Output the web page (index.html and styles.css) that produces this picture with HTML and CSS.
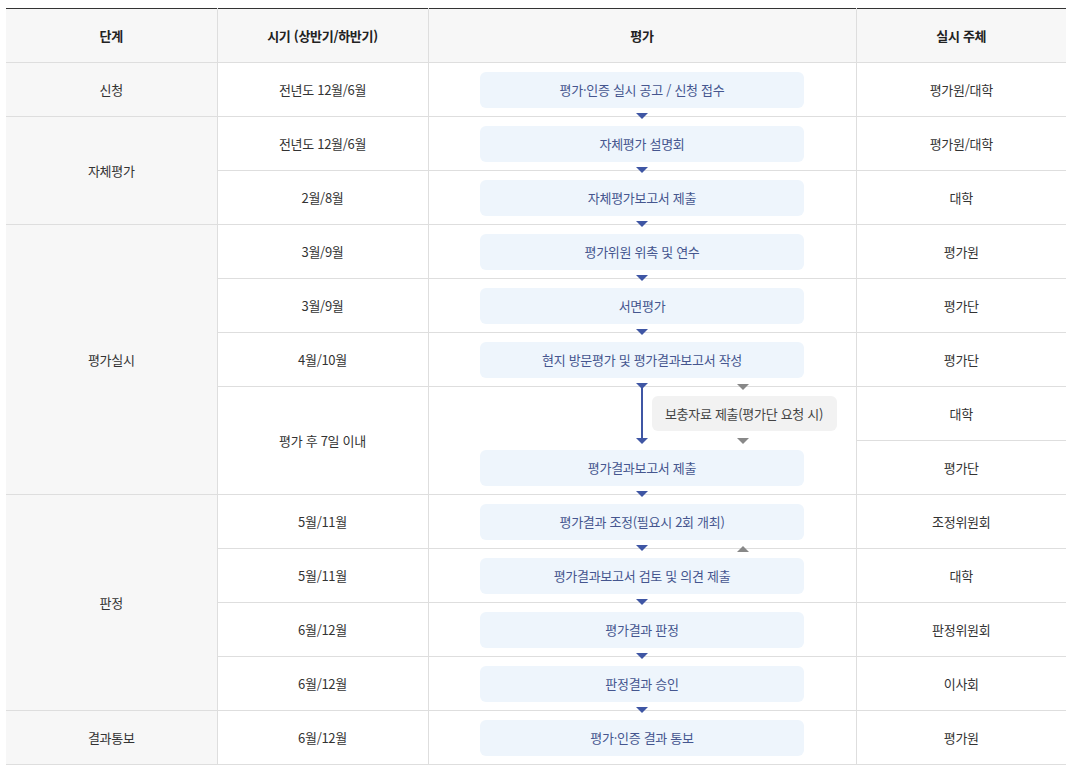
FILE: index.html
```html
<!DOCTYPE html>
<html lang="ko">
<head>
<meta charset="utf-8">
<title>평가 절차</title>
<link rel="stylesheet" href="styles.css">
</head>
<body>
<table class="proc">
  <colgroup>
    <col class="c1"><col class="c2"><col class="c3"><col class="c4">
  </colgroup>
  <thead>
    <tr><th>단계</th><th>시기 (상반기/하반기)</th><th>평가</th><th>실시 주체</th></tr>
  </thead>
  <tbody>
    <tr>
      <td class="stage">신청</td>
      <td>전년도 12월/6월</td>
      <td class="flow arrow"><div class="box">평가·인증 실시 공고 / 신청 접수</div></td>
      <td>평가원/대학</td>
    </tr>
    <tr>
      <td class="stage" rowspan="2">자체평가</td>
      <td>전년도 12월/6월</td>
      <td class="flow arrow"><div class="box">자체평가 설명회</div></td>
      <td>평가원/대학</td>
    </tr>
    <tr>
      <td>2월/8월</td>
      <td class="flow arrow"><div class="box">자체평가보고서 제출</div></td>
      <td>대학</td>
    </tr>
    <tr>
      <td class="stage" rowspan="5">평가실시</td>
      <td>3월/9월</td>
      <td class="flow arrow"><div class="box">평가위원 위촉 및 연수</div></td>
      <td>평가원</td>
    </tr>
    <tr>
      <td>3월/9월</td>
      <td class="flow arrow"><div class="box">서면평가</div></td>
      <td>평가단</td>
    </tr>
    <tr>
      <td>4월/10월</td>
      <td class="flow arrow"><div class="box">현지 방문평가 및 평가결과보고서 작성</div></td>
      <td>평가단</td>
    </tr>
    <tr>
      <td rowspan="2">평가 후 7일 이내</td>
      <td class="flow arrow branchcell" rowspan="2">
        <span class="vline"></span>
        <span class="tri blue vline-tip"></span>
        <span class="tri gray g-top"></span>
        <span class="tri gray g-bottom"></span>
        <div class="branch"><div class="box gray-box">보충자료 제출(평가단 요청 시)</div></div>
        <div class="box">평가결과보고서 제출</div>
      </td>
      <td>대학</td>
    </tr>
    <tr>
      <td>평가단</td>
    </tr>
    <tr>
      <td class="stage" rowspan="4">판정</td>
      <td>5월/11월</td>
      <td class="flow arrow up-gray"><div class="box">평가결과 조정(필요시 2회 개최)</div></td>
      <td>조정위원회</td>
    </tr>
    <tr>
      <td>5월/11월</td>
      <td class="flow arrow"><div class="box">평가결과보고서 검토 및 의견 제출</div></td>
      <td>대학</td>
    </tr>
    <tr>
      <td>6월/12월</td>
      <td class="flow arrow"><div class="box">평가결과 판정</div></td>
      <td>판정위원회</td>
    </tr>
    <tr>
      <td>6월/12월</td>
      <td class="flow arrow"><div class="box">판정결과 승인</div></td>
      <td>이사회</td>
    </tr>
    <tr>
      <td class="stage">결과통보</td>
      <td>6월/12월</td>
      <td class="flow"><div class="box">평가·인증 결과 통보</div></td>
      <td>평가원</td>
    </tr>
  </tbody>
</table>
</body>
</html>
```

FILE: styles.css
```css
* { box-sizing: border-box; }

html, body {
  margin: 0;
  background: #fff;
}

body {
  padding: 8px 4px 0 6px;
  font-family: "Noto Sans CJK KR", "Noto Sans", sans-serif;
  font-size: 13px;
  color: #333;
  letter-spacing: -0.3px;
}

.proc {
  width: 1060px;
  border-collapse: collapse;
  table-layout: fixed;
  border-top: 1px solid #333;
}

.c1 { width: 211px; }
.c2 { width: 211px; }
.c3 { width: 428px; }
.c4 { width: 210px; }

.proc th,
.proc td {
  height: 54px;
  padding: 0;
  border: 1px solid #dedede;
  text-align: center;
  vertical-align: middle;
}

.proc th:first-child,
.proc td.stage { border-left: none; }
.proc th:last-child,
.proc tr > td:last-child { border-right: none; }

.proc th {
  background: #f7f7f7;
  font-weight: 700;
  color: #222;
  border-top: 1px solid #333;
}

.proc td.stage {
  background: #f7f7f7;
  color: #333;
}

.flow {
  position: relative;
}

.box {
  width: 324px;
  height: 36px;
  margin: 0 auto;
  border-radius: 6px;
  background: #eef5fc;
  color: #45568f;
  line-height: 36px;
}

.gray-box {
  width: 185px;
  height: 35px;
  line-height: 35px;
  margin: 0;
  background: #f2f2f2;
  color: #444;
}

/* triangles */
.tri {
  position: absolute;
  width: 0;
  height: 0;
  border-left: 6.5px solid transparent;
  border-right: 6.5px solid transparent;
  border-top: 6px solid #3f56a4;
}

.tri.gray { border-top-color: #888; }

.arrow::after {
  content: "";
  position: absolute;
  left: 50%;
  bottom: -3px;
  margin-left: -6px;
  width: 0;
  height: 0;
  border-left: 6.5px solid transparent;
  border-right: 6.5px solid transparent;
  border-top: 6px solid #3f56a4;
  z-index: 2;
}

.up-gray::before {
  content: "";
  position: absolute;
  left: 50%;
  bottom: -4px;
  margin-left: 95px;
  width: 0;
  height: 0;
  border-left: 6.5px solid transparent;
  border-right: 6.5px solid transparent;
  border-bottom: 6px solid #888;
  z-index: 2;
}

/* branch cell */
.branchcell {
  vertical-align: top;
  padding-top: 10px;
}

.branch {
  display: flex;
  padding-left: 223px;
  margin-bottom: 19px;
}

.vline {
  position: absolute;
  left: 50%;
  margin-left: -1px;
  top: -3px;
  width: 2px;
  height: 54px;
  background: #3f56a4;
  z-index: 2;
}

.vline-tip {
  left: 50%;
  margin-left: -6px;
  top: 51px;
  z-index: 2;
}

.g-top {
  left: 50%;
  margin-left: 95px;
  top: -3px;
  z-index: 2;
}

.g-bottom {
  left: 50%;
  margin-left: 95px;
  top: 51px;
  z-index: 2;
}
```
